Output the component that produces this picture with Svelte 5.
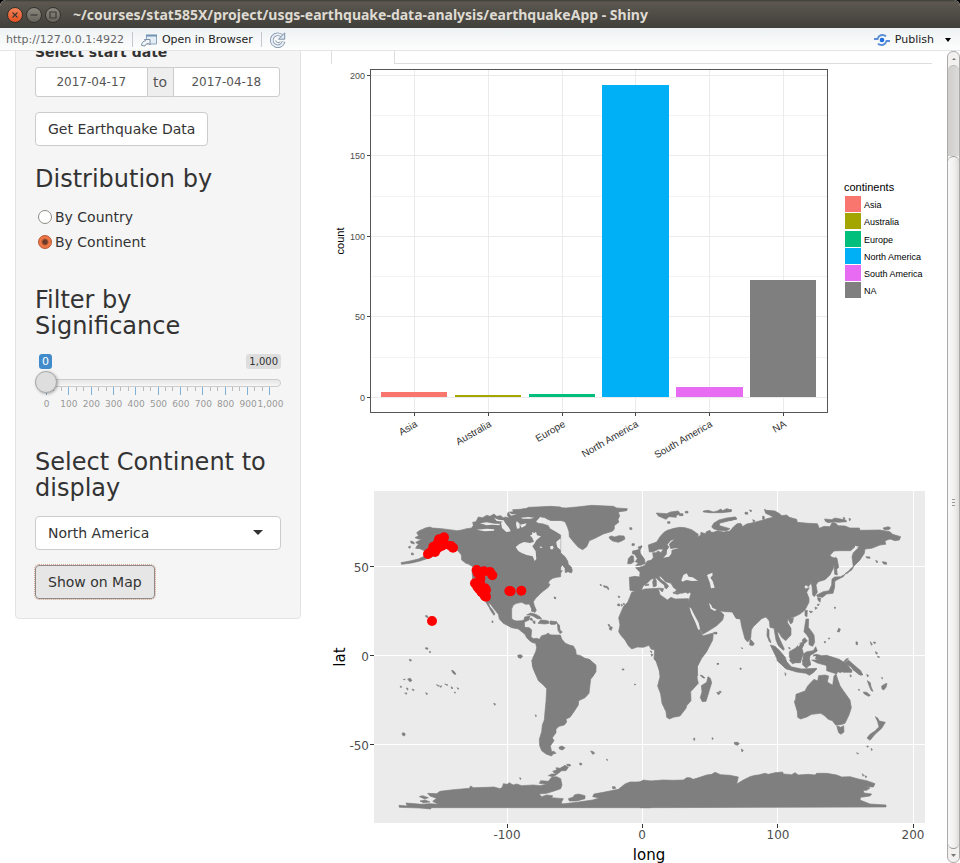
<script>
  let grouping = $state('continent');
  let significance = $state(0);
  let continent = $state('North America');
  let startDate = $state('2017-04-17');
  let endDate = $state('2017-04-18');

  const names = ['Asia', 'Australia', 'Europe', 'North America', 'South America', 'NA'];
  const bars = [
    { x: 381, y: 392, w: 66, tick: 414, fill: '#f8766d' },
    { x: 455, y: 395, w: 66, tick: 488, fill: '#a3a500' },
    { x: 529, y: 394, w: 66, tick: 562, fill: '#00bf7d' },
    { x: 602, y: 85, w: 67, tick: 635, fill: '#00b0f6' },
    { x: 676, y: 387, w: 67, tick: 709, fill: '#e76bf3' },
    { x: 750, y: 280, w: 66, tick: 783, fill: '#7f7f7f' }
  ];
  const swatches = [196, 213, 231, 248, 265, 282];
  const counts = [[200, 75], [150, 155], [100, 236], [50, 316], [0, 397]];
  const minor = [115, 196, 276, 357];
  const ticks = Array.from({ length: 31 }, (_, i) => i);
  const tickLabels = ['0', '100', '200', '300', '400', '500', '600', '700', '800', '900', '1,000'];

  // Land outlines, one sheet per part of the world; a sheet unit is a third of a pixel.
  const sheets = [
    {
      at: [370, 485],
      land: [
        'M140 143L148 137 158 133 166 129 180 126 187 129 200 130 215 131 238 134 262 137 275 135 290 131 305 129 310 121 308 112 318 110 325 96 338 98 350 91 360 94 372 87 380 94 392 92 400 98 408 96 418 100 412 91 414 82 430 80 428 74 450 73 470 70 475 67 500 66 540 64 572 66V106H548L535 104 525 98 510 95 497 110 505 115 520 117 535 122 540 132 552 138 572 150V275L560 277 548 280 538 287 535 295 540 298 535 307 520 318 512 325 497 340 490 350 493 362 499 376 494 383 486 374 478 357 467 358 455 352 440 355 430 360 425 372 425 400 430 405 440 408 455 407 462 405 464 396 480 393 477 405 470 408 463 412 464 427 478 428 485 435 483 455 490 461 500 460 508 463 515 452 527 449 535 444 540 450 555 450 572 452V572H500L490 552 487 540 488 520 497 500 500 488 497 475 488 473 480 468 470 458 465 448 445 432 425 428 400 415 388 402 385 388 372 372 362 358 350 350 325 330 305 295 308 280 306 255 311 247 295 237 288 235 275 225 274 210 262 195 245 197 225 188 208 192 196 210 180 218 150 228 125 234 95 238 93 233 120 228 145 222 160 215 168 205 175 200 158 195 150 191 137 190 142 181 147 180 137 172 150 166 155 163 145 162 135 158 146 152z',
        'M347 350L353 360 358 368 363 378 372 391 375 387 368 375 360 365 354 352z',
        'M470 390L482 384 497 388 510 395 515 402 502 401 490 394 480 390zM512 405L525 406 535 408 537 415 525 417 504 415zM543 412H556V418H543zM486 372L490 375 488 381 484 378zM115 186l5-3 2 4-4 3zM122 168l9 3 2 6-10-3zM124 204l5 0 2 5-6 1zM167 391l7 3-1 4-6-3zM443 511l8-2 7 4-5 7-8-2zM167 488l7 1-1 4-6-1zM178 499l4 1-2 4zM119 524l5 2-3 3zM247 557l5 3 4 7-5-2zM366 408l3 0 0 5-3-1zM552 336l6 2-2 4zM480 400l6 0 2 7-7-2zM490 408l5 0 0 8-6-3zM563 418l5 6 1 20-5-8z'
      ],
      water: [
        'M437 186L448 177 462 171 480 174 492 170 486 157 480 152 487 148 486 142 494 144 498 140 501 151 513 154 506 160 499 166 493 176 487 184 497 199 499 222 494 228 488 214 470 210 455 204 445 198zM393 113L402 108 407 116 417 128 422 139 409 141 396 129zM440 108L449 116 449 130 441 131 438 118zM372 98L385 104 402 106 400 110 380 108zM330 115L350 112 375 116 390 116 388 121 365 119 350 121zM320 134L350 131 373 133 372 137 344 139zM453 98L475 96 492 98 482 101 458 101zM450 119L470 115 466 122 455 128zM557 172L572 160V195L562 187zM509 184L518 187 512 190zM415 80L425 88 440 88 423 92z'
      ]
    },
    {
      at: [550, 485],
      land: [
        'M0 66L48 69 80 66 125 61 190 64 200 69 232 71 230 77 210 80 205 82 209 92 204 104 207 111 193 122 193 132 187 139 160 147 135 160 118 167 110 185 98 194 85 187 70 170 58 155 57 140 52 125 45 110 30 106 0 106z',
        'M0 132L15 142 30 153 28 160 18 162 18 180 24 197 45 215 53 228 55 238 64 246 67 257 64 264 54 260 46 263 45 250 37 240 28 252 20 250 18 258 37 257 30 266 15 275 0 280z',
        'M0 450L12 452 30 450 36 463 45 474 58 480 70 483 77 495 79 509 92 512 105 520 118 523 128 532 137 540 138 550 135 562 128 575H0z',
        'M177 156L184 153 194 156 207 152 222 153 225 162 215 168 205 172 188 168 180 162z',
        'M245 322L262 319 285 312 325 310 330 329 352 345 363 337 375 342 415 341 422 370 448 430 458 453 490 444 488 465 470 500 455 520 442 545 443 572H330L327 545 322 533 312 522 314 495 303 492 297 481 280 487 262 486 245 492 235 482 225 465 212 450 206 440 210 420 206 398 220 365 233 352 240 335z',
        'M238 277L255 274 269 276 270 262 257 248 268 247 283 242 292 228 303 226 310 218 308 203 318 203 324 198 333 203 340 193 327 192 310 200 298 201 295 180 320 171 330 155 342 142 352 136 372 130 390 127 405 128 425 134 445 148 443 155 455 150 453 142 465 146 470 140 490 142 503 137 520 141 540 138 547 139 560 118 572 115V402L558 400 548 381 525 380 510 377 522 390 518 405 500 422 480 435 458 448 450 432 437 400 418 365 417 345 423 325 415 320 395 325 375 320 380 315 370 307 363 295 347 290 333 275 326 272 332 283 345 292 356 303 350 311 345 309 343 300 330 290 318 278 303 283 293 293 280 302 274 316 258 320 240 316 239 298z',
        'M248 198L258 196 268 193 264 186 276 183 270 196 271 205 283 222 286 235 275 240 257 242 265 234 256 230 262 221 254 208 247 206zM235 221L243 212 250 213 252 230 243 236 233 236z',
        'M319 84L350 86 362 81 385 78 390 86 378 92 379 97 357 95 348 103 325 93zM388 86h11v6h-11zM406 79h8v5h-8zM353 110h7v5h-7zM485 125L492 114 507 105 530 99 555 96 561 102 535 108 508 115 509 122 540 131 530 137 505 136 490 131zM460 78L475 76 490 81 502 78 513 72 518 77 530 71 544 75 543 80 515 83 480 83 460 81zM452 151L453 143 462 148zM470 140L480 136 483 143z',
        'M312 280h4l3 8 0 15-9 3-2-15zM325 309L341 311 337 321zM370 321L392 324 383 328 370 325zM407 320L420 317 414 326zM284 299l12-2 0 4-10 1zM239 128l6 0 1 5-6 1zM246 176l7 0 0 5-7 1zM270 185l5-3 0 6zM150 298l5 2-3 3zM160 302l10 2 5 3-3 2-10-3zM172 308l4 2-1 5zM204 333l6 2-3 4zM203 357l6 0 0 6-6-1zM213 358l5 2-3 4zM219 355l5 1-2 5zM174 418l6 2-3 5zM180 424l7 3-3 9-6-3zM12 336l6 4-3 2zM303 507l6 2-4 5zM300 499l5 0 0 4zM491 442l10 0 0 5-8 0zM500 537l6-2-2 4zM217 552l5 0 0 3zM0 408l20 2 2 5-22 2zM22 415l6 5 2 15 7 6-7 5 1-8-6-10z'
      ],
      water: [
        'M394 286L400 270 410 265 416 275 428 277 444 287 425 288 410 285 397 290zM471 270L487 263 488 271 481 278 488 288 494 308 483 310 480 295zM418 366L424 371 432 388 446 413 450 432 445 435 436 412 424 386zM477 354L483 359 487 368 500 374 494 378 482 371zM373 163L362 172 357 178 362 192 375 190 387 189 365 195 364 206 357 215 340 218 350 208 351 195 358 186 352 179 362 167zM1 184L8 182 11 188 6 194 0 190z'
      ]
    },
    {
      at: [730, 485],
      land: [
        'M0 138L10 126 22 116 35 118 37 125 50 117 65 114 100 105 115 100 130 97 120 91 107 85 103 73 110 76 135 78 150 87 155 92 170 90 178 97 200 103 202 112 235 115 262 116 268 130 282 124 300 125 306 113 315 113 325 122 345 123 360 129 388 129 390 136 450 135 480 140 488 148 512 155 508 165 495 167 480 162 465 167 467 178 450 180 425 190 405 192 403 205 390 225 370 245 366 215 370 203 387 187 375 185 362 197 330 197 312 198 300 211 305 216 315 220 310 250 300 270 285 284 265 290 258 300 262 322 253 335 248 330 246 303 243 295 235 305 228 299 223 305 225 312 238 308 230 322 237 340 237 352 225 375 210 387 190 397 180 399 174 402 172 412 183 430 183 450 167 467 155 457 148 445 142 440 145 453 155 475 163 492 160 496 145 482 138 465 132 430 120 427 118 408 108 396 95 401 70 425 64 435 62 460 53 471 45 462 35 425 31 402 18 398 5 378 0 378z',
        'M60 463L66 467 73 477 68 482 59 480zM311 222L316 217 321 220 326 247 320 253 322 270 314 268zM314 276L332 275 345 268 340 275 320 285 314 290 314 306 309 325 290 327 278 337 262 335 260 330 280 320 297 317 305 300 306 282zM345 266L355 259 365 248 371 244 366 254 350 266zM263 338L272 340 270 352 264 345zM175 399L190 400 188 412 182 417 177 408zM225 377L232 376 231 395 225 392zM228 402L236 402 235 427 243 437 252 450 254 472 248 484 237 479 237 460 230 449 222 440 225 420zM217 465L224 458 232 468 218 480z',
        'M121 480L135 484 147 495 166 517 173 542 165 548 145 530zM162 544L185 546 215 552 260 550 255 556 228 562 195 557 168 551zM178 500L196 490 213 472 222 479 216 490 220 505 213 527 205 533 183 527 178 515zM220 507L231 500 250 497 257 485 262 498 240 512 238 525 242 540 235 543 232 525 226 545 218 540zM250 510L260 508 275 512 290 511 325 522 350 536 360 550 363 562 340 562 325 555 320 567 290 557 290 535 264 525 250 518zM355 520L348 530 340 533 347 523zM360 540L380 552 398 568 392 571 370 555z',
        'M284 102L305 104 315 99 347 105 350 110 325 112 312 110 295 113 286 109zM340 97l5 2-3 6zM357 100l5 2-3 6zM459 129L475 125 482 129 476 134 463 134zM45 82l8 0 0 6-8-1zM58 75l7 1-2 5zM0 101L17 96 20 101 0 107zM68 104l7 3-4 5zM98 93l5 2 0 8-5 0zM408 215l12 1 0 4-10-1zM437 226l6 3-2 5zM457 230l12 2 1 6-9-1zM262 358l6 0-4 5zM255 366l7 3-6 4zM238 378l10 2-6 4zM313 366l5 2-4 3zM326 430l5 2-3 9-6-1zM295 459l5 1-3 3zM283 469l5 2-4 3zM378 470l5 2-1 8-4-2zM421 470l6 8-3 3zM430 471l7 1-3 5zM436 500l7 4-4 4zM442 513l7 3-4 2zM112 430l5 5 0 20 6 18-5-3-7-18zM30 549l4 1-3 3zM34 488l5 2-3 1zM0 74h4v5H0zM175 488l5 0 0 5z'
      ],
      water: ['M375 182L387 185 375 190zM203 480L212 474 206 485zM245 515L258 513 254 524z']
    },
    {
      at: [370, 660],
      land: [
        'M485 0L488 18 495 38 505 62 520 75 530 86 528 125 525 155 523 180 517 195 515 215 508 238 509 257 515 272 528 282 545 288 549 282 558 280 552 274 545 275 541 258 552 242 547 233 558 218 558 208 567 199 583 195 590 186 588 177 600 172 612 155 625 135 626 122 645 113 657 100 662 58 678 35 677 15 670 10 660 0z',
        'M87 436L112 438 108 429 155 433 180 431 205 433 188 424 200 415 180 408 173 400 200 401 210 394 250 389 298 385 302 378 310 383 350 382 372 381 390 386 397 382 400 371 412 373 417 368 430 375 440 372 455 377 490 375 510 377 530 373 508 370 512 362 535 364 545 352 560 350 572 356 576 375 572 386 555 392 530 400 507 402 515 410 530 405 548 407 545 413 580 416 575 425 575 432 620 427 668 420 688 414 668 410 672 402 700 397 745 388 765 372 780 366 800 366 842 363V443H184L182 447 150 444 88 442z',
        'M535 347L545 342 557 342 548 334 560 330 558 323 570 325 585 316 595 322 588 332 575 332 565 340 550 350zM590 313h10l2 5h-9zM595 416L610 411 613 405 625 402 645 407 645 416 620 423 598 423zM148 410L158 407 175 413 165 417zM150 423L165 420 180 426 160 428zM567 262L575 258 585 263 578 270 568 267zM662 273L670 275 674 280 668 283zM629 309l6 1 0 5-5 0zM709 298l3 0 0 4zM449 353l4 2-2 4zM496 164l4 4-3 2zM371 130l6 2-3 4zM96 220l6-2 4 4-3 6-5-2zM113 57l8-2 5 7-7 3zM100 58l6 0-4 2zM245 31l7 3 6 9-6-1-5-6zM90 78l5 2-2 3zM109 84l5 1-1 6zM126 87l7 3-4 2zM104 99l7 0-2 4zM167 98l6 3-3 3zM199 74l9 3-3 2zM209 80l6-3-2 5zM224 72l10 3-3 1zM243 80l6 4-3 3zM261 83l6 3-3 2zM253 96l4 1-2 3zM756 28l6 1-5 1zM792 73l6 0-4 2zM118-2l6 2-3 3zM727 380l8 0 2 5-8 2z'
      ],
      water: []
    },
    {
      at: [640, 660],
      land: [
        'M48 0L51 12 60 38 60 50 53 78 62 102 66 130 78 155 80 172 88 177 100 172 120 168 138 145 140 137 153 122 152 95 175 70 172 58 170 35 173 0z',
        'M204 50L211 55 215 68 209 88 198 124 187 125 181 113 186 95 184 77 200 67zM182 45l7 3 6 6-5 0-8-6zM230 98l7-2 3 5-5 3zM238 93l6 2-3 4zM232 10l5 1-3 2z',
        'M468 103L495 93 503 78 515 65 522 58 533 63 536 47 555 45 566 48 562 66 578 76 582 48 588 42 593 58 600 77 610 92 630 120 634 143 627 165 615 190 602 194 587 195 577 182 565 178 552 166 542 160 515 163 500 171 482 177 473 172 472 155 463 125 467 117zM590 197L602 202 611 197 612 216 603 223 596 218zM706 170L713 174 718 183 736 187 725 205 705 223 690 241 681 234 690 223 705 213 717 200 713 185z',
        'M410 0L440 5 455 22 500 33 530 27 520 38 508 46 498 40 470 36 438 26zM448 0h34v8h-15l-10 3zM487 0h22l2 12-12 13-8-10zM515 0h85l12 15 24 15-1 7-20-8-14 9-24-10-20-12-25-7zM625 0L650 22 662 32 668 45 656 43 635 22 615 10zM680 43l6 4-3 4zM682 62L691 68 693 80 699 94 694 92 688 79zM670 96L680 97 691 106 686 109 673 102zM725 78L735 72 741 70 738 82 731 90 726 87zM655 88l5 2-4 1zM630 44l5 4-4 3zM725 52l4 3-3 2zM435 38l3 3-2 6zM160 236l5-2-2 8zM216 233l4 2-3 4zM283 247l10 0 5 4-6 5-8-3zM304 267l6 4-4 5zM680 258l6 1-4 3zM693 265l4 3-2 4zM650 278l6 3-5 0zM667 341l5 5-3 3zM675 347l6 3-4 3zM300 25l3 0 0 4z',
        'M0 366L10 360 30 363 70 360 100 361 130 360 140 353 150 353 160 358 170 355 200 345 215 343 225 337 242 344 270 346 295 351 290 372 310 360 330 350 345 346 355 345 375 340 385 343 405 338 428 336 430 342 455 344 465 338 475 345 505 343 525 345 530 340 560 340 590 345 605 351 630 350 655 357 680 362 705 371 700 381 678 380 690 384 680 391 670 391 672 399 695 402 690 408 662 412 660 420 690 432 738 435V441L0 443z'
      ],
      water: []
    }
  ];

  const quakes = [
    [186, 408], [418, 318], [422, 319], [454, 317], [174, 207], [182, 201], [195, 201], [190, 185],
    [203, 175], [207, 163], [222, 157], [203, 190], [215, 183], [225, 178], [243, 183], [249, 188],
    [320, 255], [323, 263], [342, 259], [360, 261], [367, 271], [331, 280], [315, 295], [330, 292],
    [322, 305], [328, 313], [335, 322], [344, 332], [348, 335], [345, 310], [348, 315]
  ];
</script>

<div class="window">
  <header class="titlebar">
    <button class="dot close" aria-label="Close"><svg viewBox="0 0 14 14"><path d="M4.500 4.500l5 5M9.500 4.500l-5 5" /></svg></button>
    <button class="dot" aria-label="Minimize"><svg viewBox="0 0 14 14"><path d="M3.500 7h7" /></svg></button>
    <button class="dot" aria-label="Maximize"><svg viewBox="0 0 14 14"><path d="M4 4h6v6H4z" /></svg></button>
    <h1>~/courses/stat585X/project/usgs-earthquake-data-analysis/earthquakeApp - Shiny</h1>
  </header>

  <nav class="toolbar">
    <span class="url">http://127.0.0.1:4922</span>
    <i class="sep"></i>
    <button class="tool">
      <svg width="18" height="14" viewBox="0 0 18 14">
        <path d="M5.500 2.500h10v8.500h-10z" fill="#e3edf6" stroke="#8da3b8" />
        <path d="M5 2.500h11" stroke="#6f91b3" stroke-width="2" />
        <path d="M.6 12.500c0-3 1.800-4.500 4-4.700L3.500 6.500h5.500v5.500L7.500 10.500C5.500 10.500 4.300 11.500 4 13z" fill="#f2f5f8" stroke="#72849a" stroke-width=".9" />
      </svg>
      Open in Browser
    </button>
    <i class="sep"></i>
    <button class="tool" aria-label="Reload">
      <svg width="16" height="16" viewBox="0 0 16 16">
        <path d="M12.300 4.300A6 6 0 1 0 13.600 9.500" fill="none" stroke="#7d90a8" stroke-width="3.600" />
        <path d="M12.300 4.300A6 6 0 1 0 13.600 9.500" fill="none" stroke="#e8eef5" stroke-width="2" />
        <path d="M5.800 8.500a2.500 2.500 0 0 0 4.500 1.200" fill="none" stroke="#7d90a8" />
        <path d="M14.700.8v6.400H8.500z" fill="#dfe8f1" stroke="#7d90a8" />
      </svg>
    </button>
    <button class="tool publish">
      <svg width="16" height="12" viewBox="0 0 16 12">
        <g fill="none" stroke="#5a8fd8" stroke-width="2">
          <path d="M0 5h3.500C4.500 2 6 1 8.500 1c1.500 0 2.700.5 3.500 1.400" />
          <path d="M16 7h-3.500C11.500 10 10 11 7.500 11 6 11 4.800 10.500 4 9.600" />
        </g>
        <circle cx="8" cy="6" r="2.300" fill="#1f6fe0" />
      </svg>
      Publish
      <svg class="down" width="6" height="4" viewBox="0 0 6 4"><path d="M0 0h6L3 4z" /></svg>
    </button>
  </nav>

  <div class="viewport">
    <div class="page">
      <form class="well" onsubmit={(e) => e.preventDefault()}>
        <label class="strong" for="start">Select start date</label>
        <div class="dates">
          <input id="start" type="text" bind:value={startDate} />
          <span>to</span>
          <input type="text" aria-label="End date" bind:value={endDate} />
        </div>
        <button class="btn">Get Earthquake Data</button>

        <h3>Distribution by</h3>
        <div class="radios">
          <label><input type="radio" name="by" value="country" bind:group={grouping} />By Country</label>
          <label><input type="radio" name="by" value="continent" bind:group={grouping} />By Continent</label>
        </div>

        <h3><label for="sig">Filter by Significance</label></h3>
        <div class="slider">
          <div class="bounds"><output for="sig">{significance}</output><span>1,000</span></div>
          <input id="sig" type="range" min="0" max="1000" bind:value={significance} />
          <svg viewBox="0 0 246 24">
            {#each ticks as i}
              {#if i % 3 === 0}
                <rect x={Math.round(11 + i * 7.44)} y="0" width="1" height="8" fill="#7fb0d8" />
              {:else}
                <rect x={Math.round(11 + i * 7.44)} y="0" width="1" height="4" fill="#bbb" />
              {/if}
            {/each}
            {#each tickLabels as t, i}
              <text x={11.5 + i * 22.4} y="20" text-anchor="middle">{t}</text>
            {/each}
          </svg>
        </div>

        <h3><label for="cont">Select Continent to display</label></h3>
        <div class="select">
          <select id="cont" bind:value={continent}>
            {#each names.slice(0, 5) as n}<option>{n}</option>{/each}
          </select>
          <svg width="10" height="5" viewBox="0 0 10 5"><path d="M0 0h10L5 5z" /></svg>
        </div>
        <button class="btn active">Show on Map</button>
      </form>

      <main>
        <div class="tabs"><div class="tab"></div><div class="line"></div></div>

        <svg class="bars" viewBox="331 64 601 400" role="img" aria-label="Earthquake count by continent">
          <g fill="#ebebeb">
            {#each minor as y}<rect x="371" {y} width="456" height="1" fill="#f4f4f4" />{/each}
            {#each counts as [n, y]}<rect x="371" {y} width="456" height="1" />{/each}
            {#each bars as b}<rect x={b.tick} y="70" width="1" height="342" />{/each}
          </g>
          {#each bars as b}<rect x={b.x} y={b.y} width={b.w} height={397 - b.y} fill={b.fill} />{/each}
          <rect x="370.500" y="69.500" width="457" height="343" fill="none" stroke="#555" />
          {#each counts as [n, y]}
            <rect x="367" {y} width="3" height="1" fill="#444" />
            <text x="365" y={y + 4} text-anchor="end" font-size="9" fill="#4d4d4d">{n}</text>
          {/each}
          {#each bars as b, i}
            <rect x={b.tick} y="413" width="1" height="3" fill="#444" />
            <text transform="translate({b.tick + 4} 426) rotate(-30)" text-anchor="end" font-size="10" fill="#333">{names[i]}</text>
          {/each}
          <text transform="translate(344 241) rotate(-90)" text-anchor="middle" font-size="11">count</text>
          <text x="844" y="191" font-size="11">continents</text>
          {#each swatches as y, i}
            <rect x="845" {y} width="16" height="16" fill={bars[i].fill} />
            <text x="864" y={y + 12} font-size="9">{names[i]}</text>
          {/each}
        </svg>

        <svg class="map" viewBox="331 464 601 399" role="img" aria-label="Map of earthquakes">
          <rect x="374" y="491" width="551" height="332" fill="#ebebeb" />
          <g fill="#fff">
            {#each [566, 655, 744] as y}<rect x="374" {y} width="551" height="1" />{/each}
            {#each [507, 642, 777, 913] as x}<rect {x} y="491" width="1" height="332" />{/each}
          </g>
          {#each sheets as s}
            <g transform="translate({s.at[0]} {s.at[1]}) scale(.33333)">
              {#each s.land as d}<path {d} fill="#7f7f7f" stroke="#7f7f7f" stroke-width="2" stroke-linejoin="round" />{/each}
              {#each s.water as d}<path {d} fill="#ebebeb" />{/each}
            </g>
          {/each}
          <g transform="translate(370 485) scale(.33333)" fill="#f00">
            {#each quakes as [cx, cy]}<circle {cx} {cy} r="15" />{/each}
          </g>
          <g fill="#333">
            {#each [566, 655, 744] as y}<rect x="370" {y} width="4" height="1" />{/each}
            {#each [507, 642, 777, 913] as x}<rect {x} y="824" width="1" height="4" />{/each}
          </g>
          <g font-size="12" fill="#4d4d4d" text-anchor="end">
            <text x="369" y="572">50</text>
            <text x="369" y="661">0</text>
            <text x="369" y="750">-50</text>
          </g>
          <g font-size="12" fill="#4d4d4d" text-anchor="middle">
            <text x="507" y="839">-100</text>
            <text x="642" y="839">0</text>
            <text x="778" y="839">100</text>
            <text x="913" y="839">200</text>
          </g>
          <text x="649" y="860" font-size="15" text-anchor="middle">long</text>
          <text transform="translate(345 657) rotate(-90)" font-size="15" text-anchor="middle">lat</text>
        </svg>
      </main>
    </div>

    <div class="scroll">
      <div class="arrow"><svg width="4" height="2" viewBox="0 0 4 2"><path d="M0 2h4L2 0z" /></svg></div>
      <div class="trough"></div>
      <div class="thumb"><i></i><i></i><i></i></div>
      <div class="arrow end"><svg width="5" height="3" viewBox="0 0 5 3"><path d="M0 0h5L2.500 3z" /></svg></div>
    </div>
  </div>
</div>

<style>
  :global(body) { margin: 0; background: #fff; }
  .window {
    display: flex;
    flex-direction: column;
    min-height: 100vh;
    font: 14px/20px "DejaVu Sans", sans-serif;
    color: #333;
    background: #fff;
  }
  .window *, .window { box-sizing: border-box; }
  button, input, select { font: inherit; color: inherit; margin: 0; }

  .titlebar {
    display: flex;
    align-items: center;
    gap: 3px;
    height: 28px;
    padding: 1px 7px 0;
    background: linear-gradient(#3d3c38 0, #5c5850 2px, #403f3a 100%);
    border-radius: 6px 6px 0 0;
    box-shadow: 0 -6px 0 6px #000;
    clip-path: inset(0);
  }
  .titlebar h1 {
    margin: 0 0 0 9px;
    font: bold 14px/20px "Noto Sans", "Open Sans", sans-serif;
    color: #dfdbd2;
    white-space: nowrap;
  }
  .dot {
    width: 16px;
    height: 16px;
    padding: 0;
    border: 1px solid #33322e;
    border-radius: 50%;
    background: linear-gradient(#8b887e, #66645c);
    display: flex;
  }
  .dot svg { width: 14px; height: 14px; fill: none; stroke: #3b3a36; stroke-width: 1.2; }
  .close { background: linear-gradient(#f58458, #e4501f); }

  .toolbar {
    display: flex;
    align-items: center;
    height: 23px;
    padding: 1px 9px 0 6px;
    font-size: 11px;
    background: linear-gradient(#eef2f4, #fdfdfd);
    border-bottom: 1px solid #e3e5e6;
  }
  .url { color: #666; }
  .sep { width: 1px; height: 15px; margin: 0 8px; background: #c5c9cc; }
  .tool {
    display: flex;
    align-items: center;
    gap: 3px;
    padding: 0;
    border: 0;
    background: none;
    color: #222;
  }
  .publish { margin-left: auto; gap: 5px; }
  .down { margin-left: 6px; }

  .viewport { display: flex; flex: 1; overflow: hidden; }
  .page {
    flex: 1;
    display: grid;
    grid-template-columns: minmax(0, 286px) minmax(0, 1fr);
    gap: 30px;
    align-items: start;
    padding: 0 15px;
  }
  .well {
    margin-top: -29px;
    padding: 19px;
    background: #f5f5f5;
    border: 1px solid #e3e3e3;
    border-radius: 4px;
  }
  .strong { display: block; font-weight: bold; margin-bottom: 5px; }
  .dates { display: flex; width: 245px; max-width: 100%; height: 30px; margin-bottom: 15px; }
  .dates input {
    flex: 113;
    min-width: 0;
    padding: 0 6px;
    border: 1px solid #ccc;
    border-radius: 3px 0 0 3px;
    background: #fff;
    color: #555;
    font-size: 12px;
    text-align: center;
  }
  .dates input:last-child { flex: 107; border-radius: 0 3px 3px 0; }
  .dates span {
    width: 25px;
    line-height: 28px;
    text-align: center;
    color: #555;
    background: #eee;
    border: solid #ccc;
    border-width: 1px 0;
  }
  .btn {
    display: block;
    height: 34px;
    padding: 0 12px;
    border: 1px solid #ccc;
    border-radius: 4px;
    background: #fff;
  }
  .btn.active { background: #e6e6e6; border-color: #8c8c8c; outline: 1px dotted #d9a08c; outline-offset: 0; }
  h3 { margin: 20px 0 10px; font-size: 24px; line-height: 26px; font-weight: 500; }
  .radios { display: grid; gap: 5px; padding-top: 5px; margin-bottom: 35px; }
  .radios label { display: flex; align-items: center; gap: 3px; padding-left: 3px; }
  .radios input {
    appearance: none;
    width: 14px;
    height: 14px;
    border: 1px solid #8f8b86;
    border-radius: 50%;
    background: #fff;
  }
  .radios input:checked {
    border-color: #b5532c;
    background: radial-gradient(circle, #6b3a28 0 2px, #f07746 4px);
  }
  .slider { height: 80px; padding-top: 5px; }
  .bounds { display: flex; justify-content: space-between; padding-left: 4px; height: 15px; font-size: 11px; line-height: 15px; }
  .bounds output { padding: 0 3px; border-radius: 3px; background: #428bca; color: #fff; }
  .bounds span { padding: 0 3px; border-radius: 3px; background: #ddd; font-size: 10px; }
  .slider input { appearance: none; display: block; position: relative; z-index: 1; width: 100%; height: 22px; margin-top: 3px; background: none; }
  .slider input::-webkit-slider-runnable-track {
    height: 8px;
    border: 1px solid #ccc;
    border-radius: 8px;
    background: linear-gradient(#ddd -50%, #fff 150%);
  }
  .slider input::-webkit-slider-thumb {
    appearance: none;
    width: 22px;
    height: 22px;
    margin: -9px 0 0 -1px;
    border: 1px solid #aaa;
    border-radius: 50%;
    background: #dedede;
    box-shadow: 1px 1px 3px rgba(0, 0, 0, 0.3);
  }
  .slider svg { display: block; width: 100%; margin-top: -7px; overflow: visible; font-size: 9px; fill: #999; }
  .select { position: relative; margin: 15px 0; }
  .select select {
    appearance: none;
    display: block;
    width: 100%;
    height: 34px;
    padding: 0 12px;
    border: 1px solid #ccc;
    border-radius: 4px;
    background: #fff;
  }
  .select svg { position: absolute; right: 18px; top: 14px; fill: #333; pointer-events: none; }

  .tabs { display: flex; height: 13px; }
  .tab { width: 64px; border: solid #ddd; border-width: 0 1px; }
  .line { flex: 1; border-bottom: 1px solid #ddd; }
  main svg { display: block; width: 100%; }
  .bars { font-family: "Liberation Sans", Arial, sans-serif; }
  .map { font-family: "DejaVu Sans", sans-serif; }

  .scroll {
    display: flex;
    flex-direction: column;
    width: 13px;
    border: 1px solid #aaa;
    border-radius: 6px;
    background: #f2f1f0;
  }
  .arrow { display: flex; align-items: center; justify-content: center; height: 13px; fill: #777; }
  .trough { height: 91px; border: 1px solid #b5b5b5; border-width: 1px 0 0; border-radius: 6px 6px 0 0; background: linear-gradient(90deg, #cfcecc, #dcdbd9); }
  .thumb {
    flex: 1;
    display: flex;
    flex-direction: column;
    align-items: center;
    justify-content: center;
    gap: 2px;
    border: solid #999;
    border-width: 1px 0;
    border-radius: 6px;
    background: linear-gradient(90deg, #fafafa, #f0efed 60%, #dddcd9);
  }
  .thumb i { width: 3px; height: 1px; background: #999; }
</style>
